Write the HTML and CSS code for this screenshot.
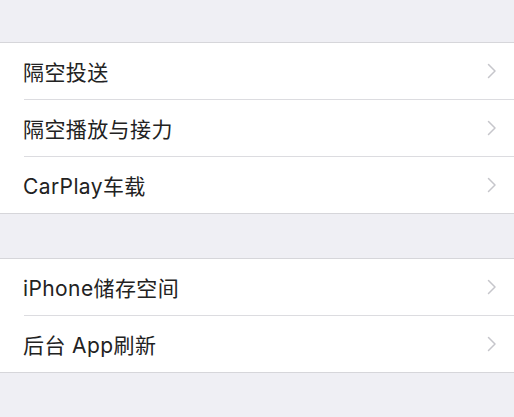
FILE: index.html
```html
<!DOCTYPE html>
<html>
    <head>
        <meta charset="utf-8">
        <link rel="stylesheet" href="styles.css">
    </head>
    <body>
        <div class="group first">
            <div class="row"><span>隔空投送</span><svg class="chevron" viewBox="0 0 10 16"><polyline points="1.5,1.5 8,8 1.5,14.5"/></svg></div>
            <div class="row"><span>隔空播放与接力</span><svg class="chevron" viewBox="0 0 10 16"><polyline points="1.5,1.5 8,8 1.5,14.5"/></svg></div>
            <div class="row"><span>CarPlay车载</span><svg class="chevron" viewBox="0 0 10 16"><polyline points="1.5,1.5 8,8 1.5,14.5"/></svg></div>
        </div>
        <div class="group">
            <div class="row"><span>iPhone储存空间</span><svg class="chevron" viewBox="0 0 10 16"><polyline points="1.5,1.5 8,8 1.5,14.5"/></svg></div>
            <div class="row"><span>后台 App刷新</span><svg class="chevron" viewBox="0 0 10 16"><polyline points="1.5,1.5 8,8 1.5,14.5"/></svg></div>
        </div>
    </body>
</html>
```
FILE: styles.css
```css
html,body {
    margin: 0;
    width: 100%;
    min-height: 100%;
    background-color: #efeff4;
    font-family: Inter, "Noto Sans CJK SC", sans-serif;
    color: #222222;
}

.group {
    background-color: #ffffff;
    border-top: 1px solid #d6d6da;
    border-bottom: 1px solid #d6d6da;
    margin-top: 44px;
    padding-left: 24px;
}

.group.first {
    margin-top: 42px;
}

.row {
    display: flex;
    align-items: center;
    justify-content: space-between;
    height: 56px;
    padding-right: 17px;
    font-size: 21px;
    letter-spacing: 0.4px;
}

.row + .row {
    border-top: 1px solid #dcdce0;
}

.row span {
    margin-left: -1px;
}

.chevron {
    width: 10px;
    height: 16px;
    fill: none;
    stroke: #c6c6cb;
    stroke-width: 1.5;
    stroke-linecap: round;
    stroke-linejoin: round;
}
```
